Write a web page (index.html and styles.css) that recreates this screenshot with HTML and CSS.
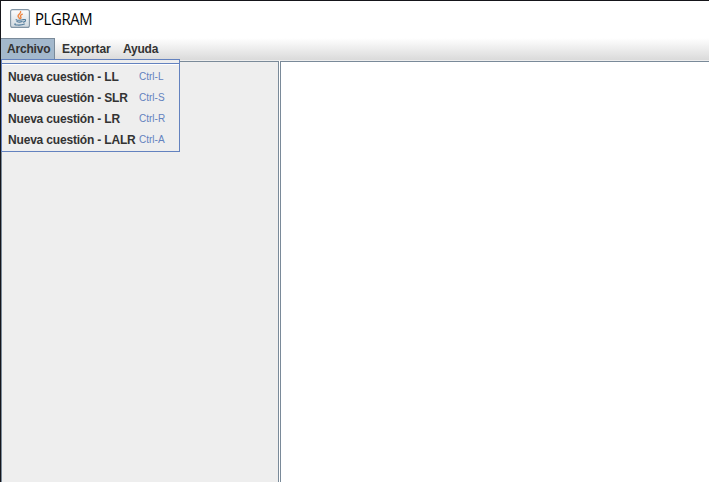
FILE: index.html
```html
<!DOCTYPE html>
<html lang="es">
<head>
<meta charset="utf-8">
<title>PLGRAM</title>
<link rel="stylesheet" href="styles.css">
</head>
<body>
<div class="window">
  <header class="titlebar">
    <svg class="app-icon" width="20" height="20" viewBox="0 0 20 20">
      <defs><linearGradient id="tile" x1="0" y1="0" x2="0" y2="1"><stop offset="0" stop-color="#fdfdfd"/><stop offset="1" stop-color="#cfd8df"/></linearGradient></defs>
      <rect x=".6" y=".6" width="18.8" height="17.8" rx="2" fill="url(#tile)" stroke="#8295a5" stroke-width="1.1"/>
      <g fill="none" stroke-linecap="round">
        <path d="M10.600 2.600c.8 2-3.200 2.700-2.500 4.700.2.900 1.200 1.300 1.300 2.200M12.300 5.200c-2.600 1.200-1.900 2.100-1.400 2.900.3.600 0 1.100-.5 1.500" stroke="#ee8540" stroke-width="1.400"/>
        <path d="M6.300 10.500c-1.600.9 5.400 1 7 .1M6.900 12.500c1.500.7 4 .6 5.300.1M13.600 10.600c2.800-.8 2.500 1.900-.2 2.500M5.200 14.800c-2.500 1.300 5.800 2 9.200.2" stroke="#527c9c" stroke-width="1.100"/>
      </g>
    </svg>
    <span class="app-title">PLGRAM</span>
  </header>
  <nav class="menubar">
    <div class="menu menu-open">
      <span class="archivo">Archivo</span>
      <div class="popup">
        <div class="separator"></div>
        <div class="item"><span class="name">Nueva cuestión - LL</span><span class="key">Ctrl-L</span></div>
        <div class="item"><span class="name">Nueva cuestión - SLR</span><span class="key">Ctrl-S</span></div>
        <div class="item"><span class="name">Nueva cuestión - LR</span><span class="key">Ctrl-R</span></div>
        <div class="item"><span class="name">Nueva cuestión - LALR</span><span class="key">Ctrl-A</span></div>
      </div>
    </div>
    <div class="menu exportar">Exportar</div>
    <div class="menu ayuda">Ayuda</div>
  </nav>
  <main class="split">
    <section class="side"></section>
    <section class="content"></section>
  </main>
</div>
</body>
</html>
```
FILE: styles.css
```css
* { box-sizing: border-box; }
body { margin: 0; overflow: hidden; background: #fff; }
.window {
  width: 709px;
  height: 482px;
  display: flex;
  flex-direction: column;
  border-top: 1px solid #15151a;
  border-left: 1px solid #15151a;
  font: bold 12px "Liberation Sans", Arial, sans-serif;
  color: #333;
}
.titlebar {
  height: 37px;
  flex: none;
  display: flex;
  align-items: flex-start;
  padding: 8px 0 0 9px;
  background: #fff;
}
.app-icon { display: block; }
.app-title {
  margin-left: 5px;
  font: 16px/20px "Open Sans", "Noto Sans", sans-serif;
  letter-spacing: -0.4px;
  transform: scaleX(0.93);
  transform-origin: left;
  color: #000;
}
.menubar {
  height: 22px;
  flex: none;
  display: flex;
  background: linear-gradient(#fff, #dadada);
  line-height: 23px;
}
.menu { position: relative; height: 21px; }
.menu-open {
  width: 54px;
  padding-left: 5px;
  background: #a3b8cc;
  border: 1px solid #7a8a99;
  border-bottom: 0;
  border-left: 0;
  line-height: 21px;
}
.archivo { letter-spacing: -0.2px; }
.exportar { width: 61px; padding-left: 7px; letter-spacing: -0.1px; }
.ayuda { padding-left: 7px; letter-spacing: -0.2px; }
.menu-open .archivo { margin-left: 1px; }
.popup {
  position: absolute;
  top: 20px;
  left: 0;
  width: 179px;
  height: 93px;
  border: 1px solid #6382bf;
  background: #eee;
  z-index: 1;
}
.separator {
  height: 6px;
  border-top: 3px solid #eee;
  background: linear-gradient(#6382bf 0 1px, #fff 1px 2px, #eee 2px);
}
.item { display: flex; height: 21px; padding-left: 6px; line-height: 23px; white-space: nowrap; }
.name { width: 131px; letter-spacing: -0.18px; }
.key { font-size: 10px; font-weight: normal; line-height: 21px; color: #6382bf; }
.split {
  flex: 1;
  display: flex;
  gap: 1px;
  background: #eee;
  border-top: 1px solid #eee;
}
.side {
  width: 278px;
  border: 1px solid #7a8a99;
  border-bottom: 0;
  box-shadow: 1px 0 #fff;
}
.content {
  flex: 1;
  background: #fff;
  border-top: 1px solid #7a8a99;
  border-left: 1px solid #7a8a99;
}
```
